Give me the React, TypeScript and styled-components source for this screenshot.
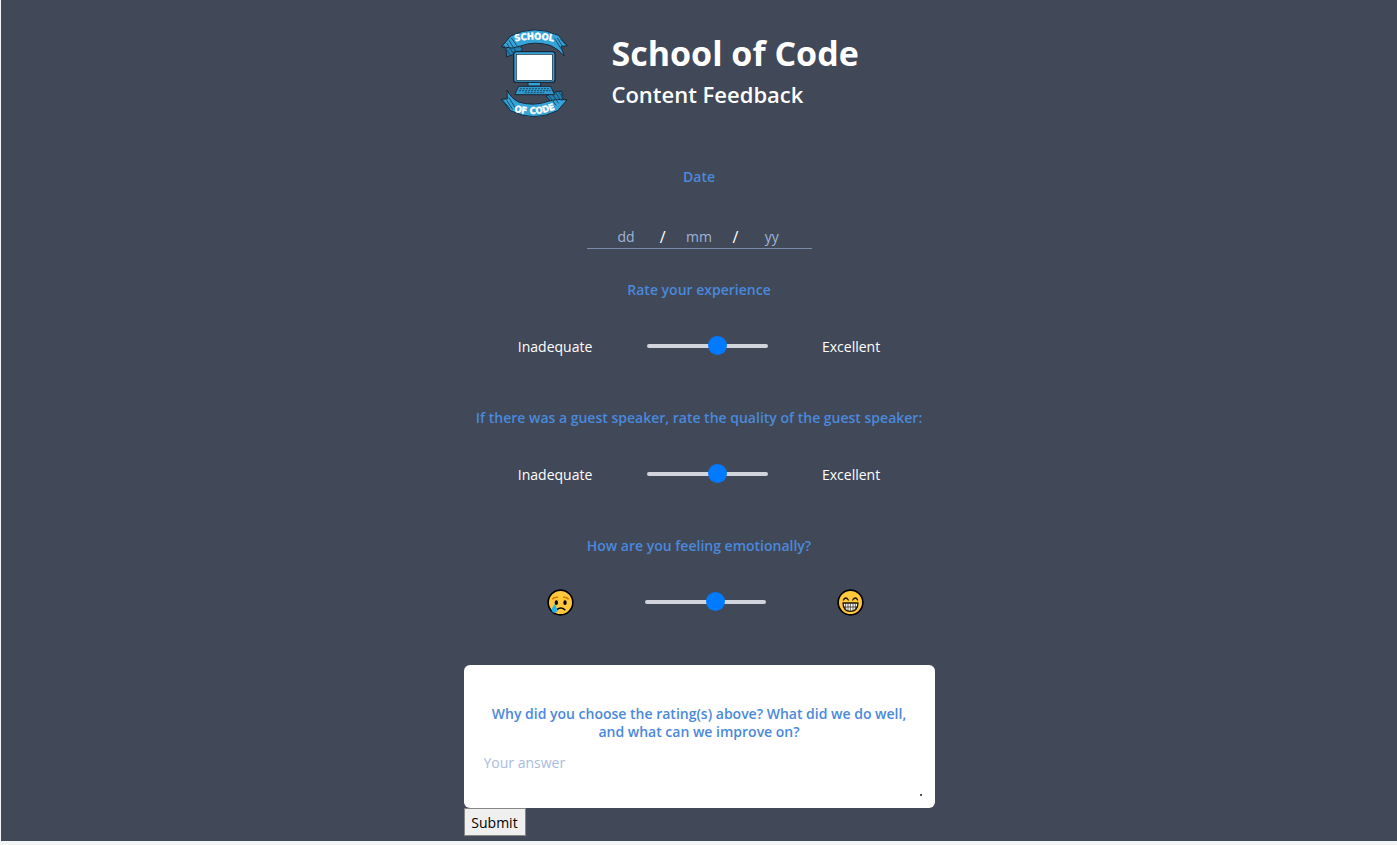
import React from "react";
import styled, { createGlobalStyle } from "styled-components";

const GlobalStyle = createGlobalStyle`
  *, *::before, *::after { box-sizing: border-box; }
  body {
    margin: 0;
    background: #f3f4f6;
    font-family: "Segoe UI", "Open Sans", "Noto Sans", sans-serif;
    font-size: 14px;
    color: #ffffff;
  }
`;

const Page = styled.main`
  margin: 0 0 4px 1px;
  padding: 29px 0 5px;
  background: #414857;
`;

const Form = styled.form`
  width: 100%;
  max-width: 471px;
  margin: 0 auto;
  display: flex;
  flex-direction: column;
`;

const Header = styled.header`
  display: flex;
  gap: 43px;
  padding-left: 36px;
  margin-bottom: 49px;
`;

const Titles = styled.div`
  padding-top: 1px;
`;

const Title = styled.h1`
  margin: 0;
  font-size: 34px;
  line-height: 46px;
  font-weight: 700;
  white-space: nowrap;
`;

const Subtitle = styled.h2`
  margin: 0;
  font-size: 22px;
  line-height: 36px;
  font-weight: 600;
`;

const Field = styled.fieldset<{ $gap: number }>`
  margin: 0 0 ${(p) => p.$gap}px;
  padding: 0;
  border: 0;
  min-width: 0;
`;

const Question = styled.legend<{ $gap: number }>`
  display: block;
  width: 100%;
  margin-bottom: ${(p) => p.$gap}px;
  padding: 0;
  font-size: 14px;
  line-height: 18px;
  font-weight: 600;
  text-align: center;
  color: #4a89dc;
`;

const DateRow = styled.div`
  display: flex;
  align-items: center;
  justify-content: center;
  width: 225px;
  margin: 0 auto;
  border-bottom: 1px solid #7b8bab;
  font-size: 16px;
  line-height: 22px;
`;

const DateInput = styled.input`
  width: 67px;
  height: 22px;
  padding: 0;
  border: 0;
  background: transparent;
  color: #ffffff;
  font: inherit;
  font-size: 14px;
  text-align: center;
  &::placeholder { color: #9fb3d9; opacity: 1; }
`;

const RatingRow = styled.div`
  display: flex;
  align-items: center;
  justify-content: space-evenly;
  height: 28px;
`;

const Slider = styled.input`
  appearance: none;
  width: 121px;
  height: 19px;
  margin: 0;
  background: transparent;
  &::-webkit-slider-runnable-track {
    height: 4px;
    border-radius: 2px;
    background: #d1d5db;
  }
  &::-webkit-slider-thumb {
    appearance: none;
    width: 19px;
    height: 19px;
    margin-top: -8px;
    border-radius: 50%;
    background: #007bff;
  }
`;

const Face = styled.span<{ $indent?: number }>`
  display: flex;
  padding-left: ${(p) => p.$indent ?? 0}px;
`;

const AnswerCard = styled.div`
  padding: 40px 10px 9px 20px;
  border-radius: 6px;
  background: #ffffff;
`;

const AnswerLabel = styled.label`
  display: block;
  padding-right: 10px;
  margin-bottom: 12px;
  font-size: 14px;
  line-height: 18px;
  font-weight: 600;
  text-align: center;
  color: #4a89dc;
`;

const Answer = styled.textarea`
  display: block;
  width: 100%;
  height: 46px;
  padding: 0;
  border: 0;
  background: transparent;
  color: #414857;
  font: inherit;
  line-height: 20px;
  resize: vertical;
  &::placeholder { color: #a8bce0; opacity: 1; }
  &::-webkit-resizer {
    background: linear-gradient(#555555, #555555) 10px 10px / 2px 2px no-repeat;
  }
`;

const SubmitButton = styled.button`
  align-self: flex-start;
  width: 62px;
  height: 28px;
  padding: 0;
  border: 1px solid #858585;
  border-radius: 0;
  background: #efefef;
  color: #000000;
  font: inherit;
  font-size: 14px;
`;

function Logo() {
  return (
    <svg width="69" height="90" viewBox="30 27 207 270" role="img" aria-label="School of Code logo">
      <defs>
        <path id="arc-top" d="M74 65 Q132 52 192 65" />
        <path id="arc-bottom" d="M72 275 Q134 292 196 268" />
      </defs>
      <g stroke="#17283a" strokeWidth="3" strokeLinejoin="round">
        <path d="M35 80 L48 84 L50 111 Q66 101 84 104 L98 86 L70 62Z" fill="#237fae" />
        <path d="M35 80 L62 48 Q132 12 205 46 L232 77 L213 79 L223 108 Q204 86 180 76 Q132 62 92 78 L66 84 L48 82Z" fill="#36a3d9" />
        <path d="M230 240 L217 236 L216 214 Q196 212 168 228 L196 260Z" fill="#237fae" />
        <path d="M34 238 L52 237 L51 210 Q64 236 86 246 Q132 260 174 244 L202 238 L231 240 L203 272 Q132 308 62 272Z" fill="#36a3d9" />
      </g>
      <path d="M42 77 L60 104 M50 69 L70 101 M57 61 L80 98 M64 54 L86 84 M210 56 L226 73 M202 54 L217 78 M194 56 L218 94 M39 241 L60 266 M50 241 L68 268 M56 232 L75 262 M174 224 L198 256 M184 219 L206 250 M195 216 L214 242 M206 215 L222 238" fill="none" stroke="#174e70" strokeWidth="3" />
      <path d="M114 184 h38 v14 h-38Z" fill="#36a3d9" stroke="#17283a" strokeWidth="3" />
      <rect x="71" y="95" width="124" height="92" rx="8" fill="#36a3d9" stroke="#17283a" strokeWidth="4" />
      <rect x="79" y="103" width="108" height="78" fill="#ffffff" stroke="#17283a" strokeWidth="2" />
      <path d="M86 199 H182 L194 224 H74Z" fill="#3299cd" stroke="#17283a" strokeWidth="3" />
      <path d="M90 206 H178 M87 212 H182 M104 218 H162" fill="none" stroke="#1b4b69" strokeWidth="3" strokeDasharray="6 3" />
      <g fill="#ffffff" stroke="#ffffff" strokeWidth="1" fontFamily="'Liberation Sans Narrow', 'DejaVu Sans Condensed', sans-serif" fontWeight="700" fontSize="28" textAnchor="middle">
        <text><textPath href="#arc-top" startOffset="50%">SCHOOL</textPath></text>
        <text><textPath href="#arc-bottom" startOffset="50%">OF CODE</textPath></text>
      </g>
    </svg>
  );
}

function SadFace() {
  return (
    <svg width="27" height="27" viewBox="0 0 81 81" role="img" aria-label="Sad">
      <circle cx="40.500" cy="40.500" r="37" fill="#ffc83d" stroke="#000000" strokeWidth="5" />
      <path d="M16 31 Q20 24 33 25 M48 25 Q61 24 65 31" fill="none" stroke="#d67d00" strokeWidth="5" />
      <ellipse cx="28" cy="41" rx="5" ry="7" fill="#000000" />
      <ellipse cx="54" cy="41" rx="5" ry="7" fill="#000000" />
      <path d="M30 62 Q41 52 53 62" fill="none" stroke="#000000" strokeWidth="5" strokeLinecap="round" />
      <path d="M23 46 Q13 59 14 65 Q17 72 24 71 Q31 69 31 63 Q30 56 23 46Z" fill="#21b5ef" />
    </svg>
  );
}

function HappyFace() {
  return (
    <svg width="27" height="27" viewBox="0 0 81 81" role="img" aria-label="Happy">
      <circle cx="40.500" cy="40.500" r="37" fill="#ffc83d" stroke="#000000" strokeWidth="5" />
      <path d="M19 33 Q26 21 34 33 M47 33 Q55 21 62 33" fill="none" stroke="#1c1400" strokeWidth="4" strokeLinecap="round" />
      <path d="M18 42 H63 Q62 67 40 67 Q19 67 18 42Z" fill="#ffffff" stroke="#1c1400" strokeWidth="4" strokeLinejoin="round" />
      <path d="M19 54 H62 M26 43 V62 M33 43 V66 M40 43 V66 M48 43 V66 M55 43 V62" fill="none" stroke="#1c1400" strokeWidth="2" />
    </svg>
  );
}

type RatingProps = { question: string; name: string; low: React.ReactNode; high: React.ReactNode };

function Rating({ question, name, low, high }: RatingProps) {
  return (
    <Field $gap={49}>
      <Question $gap={33}>{question}</Question>
      <RatingRow>
        {low}
        <Slider type="range" name={name} min={0} max={10} defaultValue={6} aria-label={question} />
        {high}
      </RatingRow>
    </Field>
  );
}

export default function App() {
  return (
    <>
      <GlobalStyle />
      <Page>
        <Form onSubmit={(e) => e.preventDefault()}>
          <Header>
            <Logo />
            <Titles>
              <Title>School of Code</Title>
              <Subtitle>Content Feedback</Subtitle>
            </Titles>
          </Header>
          <Field $gap={32}>
            <Question $gap={40}>Date</Question>
            <DateRow>
              <DateInput placeholder="dd" aria-label="Day" />
              <span>/</span>
              <DateInput placeholder="mm" aria-label="Month" />
              <span>/</span>
              <DateInput placeholder="yy" aria-label="Year" />
            </DateRow>
          </Field>
          <Rating
            question="Rate your experience"
            name="experience"
            low={<span>Inadequate</span>}
            high={<span>Excellent</span>}
          />
          <Rating
            question="If there was a guest speaker, rate the quality of the guest speaker:"
            name="speaker"
            low={<span>Inadequate</span>}
            high={<span>Excellent</span>}
          />
          <Rating
            question="How are you feeling emotionally?"
            name="feeling"
            low={<Face $indent={12}><SadFace /></Face>}
            high={<Face><HappyFace /></Face>}
          />
          <AnswerCard>
            <AnswerLabel htmlFor="answer">
              Why did you choose the rating(s) above? What did we do well, and what can we improve on?
            </AnswerLabel>
            <Answer id="answer" placeholder="Your answer" />
          </AnswerCard>
          <SubmitButton type="submit">Submit</SubmitButton>
        </Form>
      </Page>
    </>
  );
}
